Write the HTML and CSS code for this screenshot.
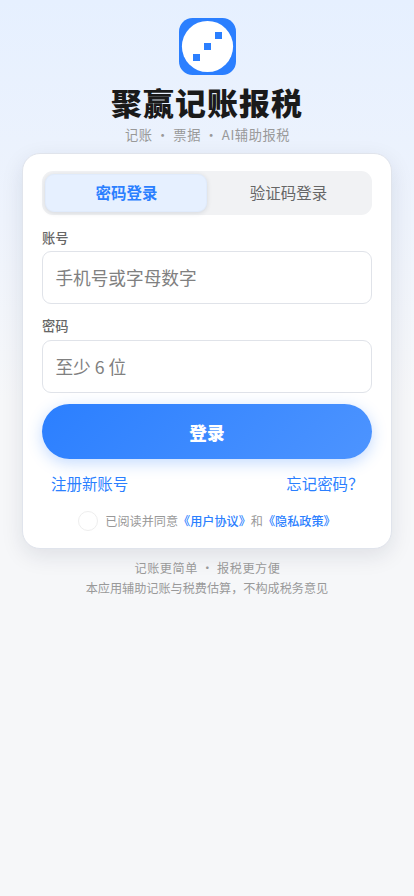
FILE: index.html
```html
<!DOCTYPE html>
<html lang="zh-CN">
<head>
<meta charset="UTF-8">
<meta name="viewport" content="width=device-width, initial-scale=1">
<title>聚赢记账报税</title>
<link rel="stylesheet" href="styles.css">
</head>
<body>
<main class="page">
  <header class="brand">
    <svg class="logo" viewBox="0 0 57 57" aria-hidden="true">
      <rect width="57" height="57" rx="13.5" fill="#2b7fff"/>
      <circle cx="28.5" cy="28.5" r="25.6" fill="#fff"/>
      <path fill="#2b7fff" d="M14 36h7v7h-7zM25 25h7v7h-7zM36 14h7v7h-7z"/>
    </svg>
    <h1 class="title">聚赢记账报税</h1>
    <p class="subtitle">记账 · 票据 · AI辅助报税</p>
  </header>
  <form class="card">
    <div class="tabs">
      <button type="button" class="tab active">密码登录</button>
      <button type="button" class="tab">验证码登录</button>
    </div>
    <label class="label" for="account">账号</label>
    <input class="input" id="account" type="text" placeholder="手机号或字母数字">
    <label class="label second" for="password">密码</label>
    <input class="input" id="password" type="password" placeholder="至少 6 位">
    <button type="button" class="submit">登录</button>
    <div class="links"><a>注册新账号</a><a>忘记密码？</a></div>
    <div class="agreement">
      <span class="radio"></span>
      <span>已阅读并同意</span><a>《用户协议》</a><span>和</span><a>《隐私政策》</a>
    </div>
  </form>
  <footer class="footer">
    <p class="slogan">记账更简单 · 报税更方便</p>
    <p>本应用辅助记账与税费估算，不构成税务意见</p>
  </footer>
</main>
</body>
</html>
```
FILE: styles.css
```css
* { box-sizing: border-box; }
body {
  margin: 0;
  color: #1a1a1a;
  font-family: "Noto Sans CJK SC", sans-serif;
}
h1, p { margin: 0; }
button, input { font-family: inherit; }
.page {
  min-height: 896px;
  padding: 18px 22px 0;
  background: linear-gradient(180deg, #e6f0ff 0, #eef3fc 220px, #f6f7f9 400px);
}
.brand { display: flex; flex-direction: column; align-items: center; }
.logo { width: 57px; height: 57px; }
.title {
  margin-top: 8px;
  font-size: 30.9px;
  font-weight: 900;
  line-height: 38px;
  letter-spacing: 1.1px;
}
.subtitle {
  margin-top: 4px;
  padding-left: 1px;
  color: #999;
  font-size: 13.25px;
  line-height: 20px;
  letter-spacing: .55px;
}
.card {
  height: 396px;
  margin-top: 8px;
  padding: 17px 19px 0;
  border: 1px solid #e0e4ec;
  border-radius: 18px;
  background: #fff;
  box-shadow: 0 7px 22px rgba(20, 30, 60, .1);
}
.tabs {
  display: flex;
  height: 44px;
  padding: 3px;
  border-radius: 11px;
  background: #f1f2f4;
}
.tab {
  flex: 1;
  padding: 0 0 2px 1px;
  border: 1px solid transparent;
  border-radius: 9px;
  background: none;
  color: #666;
  font-size: 15.46px;
}
.tab.active {
  border-color: #e0ebfc;
  background: #e6f0ff;
  color: #2b7fff;
  font-weight: 700;
  box-shadow: 0 1px 5px rgba(20, 30, 60, .12);
}
.label {
  display: block;
  margin: 13px 0 3px;
  color: #666;
  font-size: 13.25px;
  font-weight: 500;
  line-height: 20px;
}
.label.second { margin: 12px 0 4px; }
.input {
  display: block;
  width: 100%;
  height: 53px;
  padding: 0 12.4px 1px;
  border: 1px solid #e0e3e9;
  border-radius: 9px;
  background: #fff;
  font-size: 17.66px;
}
.input::placeholder { color: #808080; }
.submit {
  display: block;
  width: 100%;
  height: 55px;
  margin-top: 11px;
  padding: 1px 0 0;
  border: 0;
  border-radius: 28px;
  background: linear-gradient(135deg, #2b7fff, #4d94ff);
  color: #fff;
  font-size: 17.66px;
  font-weight: 800;
  box-shadow: 0 4px 15px rgba(43, 127, 255, .28);
}
a { color: #2b7fff; }
.links {
  display: flex;
  justify-content: space-between;
  margin-top: 12px;
  padding: 0 8.5px 0 9px;
  font-size: 15.46px;
  line-height: 24px;
}
.agreement {
  display: flex;
  align-items: center;
  justify-content: center;
  margin-top: 16px;
  color: #999;
  font-size: 12.14px;
  line-height: 20px;
}
.agreement a { font-weight: 500; }
.radio {
  width: 20px;
  height: 20px;
  margin-right: 7px;
  border: 1px solid #eee;
  border-radius: 50%;
}
.footer {
  margin-top: 9px;
  color: #999;
  font-size: 12.14px;
  line-height: 20px;
  text-align: center;
}
.slogan { padding-left: 1px; letter-spacing: .55px; }
```
